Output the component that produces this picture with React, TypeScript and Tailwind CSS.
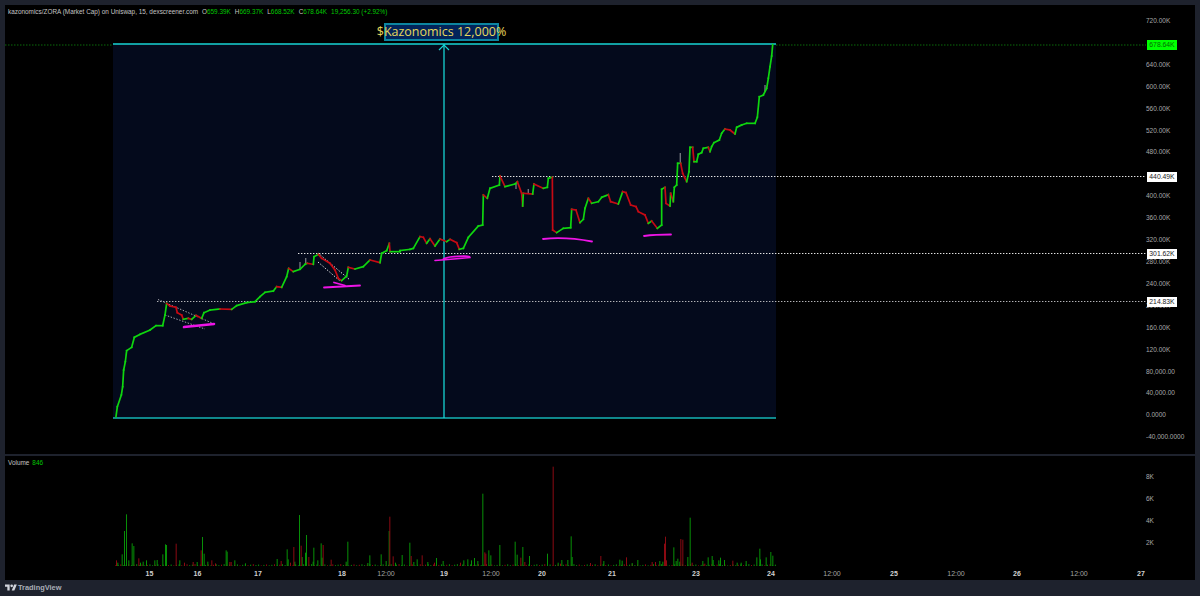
const z2 = [[48,560],[52,530],[64,495],[68,470],[71,420],[76,395],[80,362],[95,352],[103,322],[120,313],[150,300],[168,287],[188,287],[195,255],[200,220],[210,228],[228,232],[232,248],[245,255],[250,268],[265,265],[275,268],[288,256],[305,265],[312,248],[330,240],[360,237],[395,238],[410,227],[440,218],[465,215],[480,200],[495,187],[520,183],[530,170],[545,172],[560,140],[566,115],[580,125],[600,118],[615,103],[622,100],[640,103],[642,80],[655,73],[665,85],[690,100],[705,120],[715,145],[725,152],[740,138],[745,112],[765,117],[790,110],[810,90],[840,98],[845,70],[860,62],[868,40],[870,65],[900,65]].map(([x, y]) => [100 + x / 3, 230 + y / 3]);
const z3 = [[0,272],[30,268],[40,265],[60,230],[70,232],[80,250],[90,236],[105,258],[120,237],[140,245],[150,238],[170,248],[178,268],[190,265],[205,232],[235,198],[248,195],[250,105],[262,115],[270,85],[298,75],[300,48],[315,80],[345,72],[352,65],[365,100],[368,138],[370,100],[398,102],[402,72],[430,85],[442,82],[445,55],[457,52],[458,210],[470,218],[490,205],[512,203],[515,148],[528,150],[540,188],[550,178],[555,145],[565,115],[575,130],[595,125],[605,112],[625,104],[632,125],[655,132],[668,95],[678,98],[692,135],[708,140],[715,155],[735,165],[745,190],[755,183],[772,205]].map(([x, y]) => [400 + x / 3, 160 + y / 3]);
const z4 = [[65,585],[65,478],[75,472],[78,520],[90,528],[92,490],[100,515],[103,472],[110,465],[113,400],[122,400],[128,430],[140,455],[147,425],[150,352],[158,352],[162,395],[170,395],[175,373],[185,368],[190,355],[205,352],[210,365],[215,350],[222,338],[238,330],[245,310],[255,297],[270,300],[285,312],[290,292],[305,285],[320,280],[345,280],[352,262],[358,200],[370,195],[380,175],[385,145],[390,110],[395,78],[398,44]].map(([x, y]) => [640 + x / 3, 30 + y / 3]);
const price = [...z2, ...z3, ...z4];

const wicks = [[300,262,300,269],[305.7,258,305.7,264],[680.3,153,680.3,163],[765,85,765,92],[528.3,189,528.3,193],[516,183,516,189]];

const greens7 = [[378,190],[372,240],[365,310],[395,277],[400,285],[352,335],[385,328],[420,335],[428,332],[438,328],[463,328],[470,327],[487,310],[495,280],[498,282],[538,328],[590,333],[606,258],[611,308],[622,332],[677,298],[680,302],[703,328],[735,337],[830,324],[860,295],[863,325],[883,332],[897,192],[905,318],[915,305],[918,252],[940,290],[938,332],[952,328],[962,277],[965,320],[1042,272],[1037,332],[1108,313],[1142,310],[1157,330],[1166,240],[1102,336],[1185,335]];
const reds7 = [[348,328],[527,278],[415,322],[552,335],[578,333],[602,298],[634,328],[645,337],[688,333],[692,333],[842,330],[880,288],[902,284],[925,318],[968,282],[992,326],[1168,197],[1178,316],[870,335]];
const greens8 = [[5,312],[28,275],[40,333],[50,325],[82,333],[108,321],[128,330],[190,328],[202,325],[213,328],[222,321],[232,330],[247,128],[265,298],[271,313],[298,282],[344,272],[350,311],[367,288],[387,315],[441,308],[473,335],[484,327],[502,327],[512,256],[515,318],[610,330],[658,326],[665,329],[695,336],[712,327],[778,330],[787,332],[820,289],[827,330],[832,323],[838,332],[862,318],[869,200],[907,330],[923,319],[935,315],[938,327],[955,328],[960,320],[972,327],[1010,335],[1022,335],[1037,330],[1069,319],[1078,293],[1080,325],[1097,319],[1111,303],[1117,314]];
const reds8 = [[32,315],[65,313],[102,335],[180,335],[253,304],[256,308],[361,320],[373,333],[458,47],[601,315],[678,319],[755,333],[765,333],[792,278],[795,257],[798,328],[841,264],[847,266],[875,335],[913,338],[997,329],[570,336],[480,338]];

const toBar = (off: number) => ([x, y]: number[]) => ({ x: off + x / 3, h: (345 - y) / 3 });
const gBars = [...greens7.map(toBar(0)), ...greens8.map(toBar(400))];
const rBars = [...reds7.map(toBar(0)), ...reds8.map(toBar(400))];
const noise = Array.from({ length: 250 }, (_, i) => ({
  x: 115 + i * 2.65,
  h: 0.6 + ((i * 37) % 11) / 8,
  red: (i * 13) % 5 < 2,
}));

const prices = ["720.00K", "", "640.00K", "600.00K", "560.00K", "520.00K", "480.00K", "", "400.00K", "360.00K", "320.00K", "280.00K", "240.00K", "200.00K", "160.00K", "120.00K", "80,000.00", "40,000.00", "0.0000", "-40,000.0000"];
const volTicks = ["8K", "6K", "4K", "2K"];
const times: [string, number, boolean][] = [["15",149.5,true],["16",197.5,true],["17",258,true],["18",342,true],["12:00",386,false],["19",444,true],["12:00",491,false],["20",542,true],["21",612,true],["23",696,true],["24",771,true],["12:00",832,false],["25",894,true],["12:00",956,false],["26",1017,true],["12:00",1079,false],["27",1141,true]];
const tags: [string, string, string][] = [
  ["678.64K", "top-[35px] bg-[#00ff00]", "text-[#046b04]"],
  ["440.49K", "top-[167px] bg-white", "text-[#222222]"],
  ["301.62K", "top-[244px] bg-white", "text-[#222222]"],
  ["214.83K", "top-[292px] bg-white", "text-[#222222]"],
];
const values: [string, string][] = [["O", "659.39K"], ["H", "669.37K"], ["L", "668.52K"], ["C", "678.64K"]];

export default function App() {
  return (
    <div className="w-[1200px] h-[596px] bg-[#1e222d] pt-[5px] px-[5px] flex flex-col overflow-hidden font-['Liberation_Sans',sans-serif]">
      <div className="relative h-[449px] bg-black flex shrink-0">
        <svg className="absolute inset-0 w-full h-full" viewBox="5 5 1190 449">
          <line x1="5" y1="45" x2="1146" y2="45" stroke="#0a6b0a" strokeWidth="1" strokeDasharray="1.5 1.5" />
          <rect x="113" y="44" width="663" height="374" fill="#040a1c" />
          <line x1="113" y1="44" x2="776" y2="44" stroke="#17d4d4" strokeWidth="1.3" />
          <line x1="113" y1="418" x2="776" y2="418" stroke="#14b4b6" strokeWidth="1.3" />
          <line x1="444" y1="44" x2="444" y2="418" stroke="#17d4d4" strokeWidth="1.3" />
          <path d="M439 50 L444 45 L449 50" fill="none" stroke="#17d4d4" strokeWidth="1.2" />
          <g stroke="#e4e4e4" strokeWidth="1" strokeDasharray="1.4 1.6">
            <line x1="492" y1="176.5" x2="1146" y2="176.5" />
            <line x1="298" y1="253.5" x2="1146" y2="253.5" />
            <line x1="157" y1="301.5" x2="1146" y2="301.5" stroke="#b4b4b8" />
            <line x1="158" y1="299.5" x2="212" y2="323" stroke="#a8a8b0" />
            <line x1="165" y1="315" x2="205" y2="329" stroke="#a8a8b0" />
            <line x1="318" y1="253" x2="350" y2="280" />
            <line x1="318" y1="262" x2="340" y2="281" />
          </g>
          <g stroke="#70747c" strokeWidth="1.4">
            {wicks.map(([a, b, c, d], i) => <line key={i} x1={a} y1={b} x2={c} y2={d} />)}
          </g>
          <g strokeWidth="1.7" strokeLinecap="square">
            {price.slice(1).map(([x, y], i) => {
              const [px, py] = price[i];
              return <line key={i} x1={px} y1={py} x2={x} y2={y} stroke={y <= py ? "#0fd60f" : "#c60a14"} />;
            })}
          </g>
          <g fill="none" stroke="#ee14e6" strokeLinecap="round">
            <path d="M184 327 L214 324" strokeWidth="2.6" />
            <path d="M324 287.5 L360 285.5" strokeWidth="1.8" />
            <path d="M334 282.5 L345 285.5" strokeWidth="1.8" />
            <path d="M435 260.5 Q455 259 470 257.5 Q470 255 450 257 Q440 259 445 259.5" strokeWidth="1.6" />
            <path d="M543 239 Q565 236.5 592 241.5" strokeWidth="1.8" />
            <path d="M644 236 Q655 234.5 671 234.5" strokeWidth="1.8" />
          </g>
        </svg>

        <div className="relative flex-1">
          <div className="absolute left-[3px] top-[3px] flex items-center gap-[3px] text-[6.4px] leading-[8px] whitespace-nowrap text-[#c4c4c4]">
            <span>kazonomics/ZORA (Market Cap) on Uniswap, 15, dexscreener.com</span>
            {values.map(([k, v]) => (
              <span key={k} className="ml-[1px]">{k}<span className="text-[#00c800]">{v}</span></span>
            ))}
            <span className="ml-[1px] text-[#00c800]">19,256.30 (+2.92%)</span>
          </div>
          <div className="absolute left-[379px] top-[18px] w-[115px] h-[18px] flex items-center justify-center bg-[#02245a] border-2 border-[#0d85a0] text-[#e8d85c] text-[12.5px] font-['Open_Sans',sans-serif] whitespace-nowrap">
            $Kazonomics 12,000%
          </div>
        </div>

        <div className="relative w-[49px] mr-0 pt-[11px] flex flex-col text-[6.5px] text-[#a8a8a8]">
          {prices.map((p, i) => (
            <div key={i} className="h-[22.15px] leading-[10px] whitespace-nowrap">{p}</div>
          ))}
        </div>
        {tags.map(([t, box, txt]) => (
          <div key={t} className={`absolute left-[1142px] w-[30px] h-[10px] flex items-center justify-center text-[6.8px] ${box} ${txt}`}>{t}</div>
        ))}
      </div>

      <div className="h-[1.5px] bg-[#1e222d] shrink-0" />

      <div className="relative h-[124px] bg-black flex shrink-0">
        <svg className="absolute inset-0 w-full h-full" viewBox="5 455 1190 124">
          {noise.map((n, i) => (
            <rect key={i} x={n.x} y={565 - n.h} width="1" height={n.h} fill={n.red ? "#8b0a12" : "#0a8a0a"} />
          ))}
          {gBars.map((b, i) => <rect key={i} x={b.x} y={565 - b.h} width="1" height={b.h} fill="#078f07" />)}
          {rBars.map((b, i) => <rect key={i} x={b.x} y={565 - b.h} width="1" height={b.h} fill="#8b0a12" />)}
          {times.map(([t, x, day], i) => (
            <text key={i} x={x} y={574.5} textAnchor="middle" fontSize="7" fontWeight={day ? 700 : 400} fill={day ? "#d0d0d0" : "#a4a4a4"}>{t}</text>
          ))}
        </svg>
        <div className="relative flex-1">
          <div className="absolute left-[3px] top-[3px] flex gap-[3px] text-[6.4px] leading-[8px] text-[#c4c4c4]">
            <span>Volume</span>
            <span className="text-[#00c800]">846</span>
          </div>
        </div>
        <div className="relative w-[49px] pt-[16px] flex flex-col text-[6.5px] text-[#a8a8a8]">
          {volTicks.map((t) => (
            <div key={t} className="h-[22.1px] leading-[10px]">{t}</div>
          ))}
        </div>
      </div>

      <div className="flex-1 flex items-center gap-[1px]">
        <svg width="12" height="9" viewBox="0 0 36 26" fill="#d1d4dc">
          <path d="M14 22H7V11H0V4h14v18z" />
          <path d="M28 22h-8l7.5-18h8L28 22z" />
          <circle cx="20" cy="8" r="4" />
        </svg>
        <span className="text-[7.4px] font-semibold text-[#a9adb6]">TradingView</span>
      </div>
    </div>
  );
}
